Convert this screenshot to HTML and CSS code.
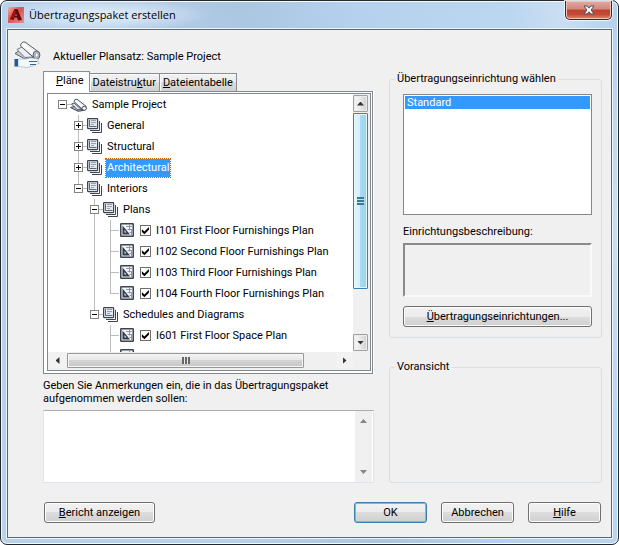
FILE: index.html
```html
<!DOCTYPE html>
<html lang="de">
<head>
<meta charset="utf-8">
<title>Übertragungspaket erstellen</title>
<link rel="stylesheet" href="styles.css">
</head>
<body>
<svg class="defs" aria-hidden="true">
  <defs>
    <linearGradient id="steel" x1="0" y1="1" x2="1" y2="0"><stop offset="0" stop-color="#9aa3ae"/><stop offset=".5" stop-color="#fff"/><stop offset="1" stop-color="#b4bbc4"/></linearGradient>
    <linearGradient id="red" x1="0" y1="0" x2="1" y2="1"><stop offset="0" stop-color="#f4b0ac"/><stop offset=".45" stop-color="#d9534f"/><stop offset="1" stop-color="#f0908c"/></linearGradient>
    <symbol id="stack" viewBox="0 0 16 16">
      <path d="M14.500 5v9.500H5M12.500 3v9.500H3" fill="none" stroke="#3c4454"/>
      <rect x=".6" y=".6" width="10" height="10" rx=".5" fill="#e4e9ee" stroke="#3c4454" stroke-width="1.2"/>
      <path d="M2.500 2v6.500h7" fill="none" stroke="#5d6675"/>
      <path d="M4 2.500h5M4 4.500h5M4 6.500h3" fill="none" stroke="#98a1ad"/>
    </symbol>
    <symbol id="sheet" viewBox="0 0 15 15">
      <rect x=".75" y=".75" width="12.500" height="12.500" rx=".5" fill="#f2f4f6" stroke="#3c4454" stroke-width="1.5"/>
      <path d="M2.500 2.500v9h7.500zM4.500 7v2.500h2z" fill="#323b4c" fill-rule="evenodd"/>
      <path d="M6 3.500h6M9.500 2v5.500M7.500 6.500h4.500M11.500 7v5M9.500 9.500h3" fill="none" stroke="#8e97a5"/>
    </symbol>
    <symbol id="rolls" viewBox="0 0 18 14">
      <path d="M.5 9.500 4 8.500l9 4-5 .8z" fill="#b3bbc5" stroke="#3f4754"/>
      <path d="M1.500 6 4 5l8 7-5-.5z" fill="#dfe3e8" stroke="#4f5765"/>
      <path d="M4 3.500Q4.500 .7 7 1.200l9 7q.8 3.500-2.500 4.300z" fill="url(#steel)" stroke="#4a5260"/>
      <ellipse cx="14.200" cy="10.300" rx="2.200" ry="2" fill="#f3f5f7" stroke="#4a5260"/>
    </symbol>
  </defs>
</svg>
<div class="window" role="dialog" aria-labelledby="title">
  <header class="titlebar">
    <svg class="app-icon" viewBox="0 0 16 16" aria-hidden="true">
      <rect width="16" height="16" fill="url(#red)"/>
      <path d="M6.500 2h3L14 13l-4 .5-1-3H6.500l-1 2.500L2 12z" fill="#5e0c0e"/>
      <path d="M6.500 2 2 12l4-1.500L8 5z" fill="#a31316"/>
      <path d="M8 6.500 7.200 9h1.700z" fill="#dd6662"/>
    </svg>
    <h1 id="title">Übertragungspaket erstellen</h1>
    <button class="close" type="button" aria-label="Schließen">
      <svg viewBox="0 0 12 10" aria-hidden="true"><path d="M1 1h3l2 2.200L8 1h3L8 5l3 4H8L6 6.800 4 9H1l3-4z" fill="#fff" stroke="#4b4f63"/></svg>
    </button>
  </header>

  <main class="client">
    <div class="current">
      <svg class="current-icon" viewBox="0 0 27 30" aria-hidden="true">
        <path d="M1 12.500 6 9l14 7-9 2z" fill="#c3cad2" stroke="#59616d"/>
        <path d="M3 8.500 8 6l11 10-8 .5z" fill="#eceef1" stroke="#717985"/>
        <path d="M6.500 5Q7 .5 11 1l13 9.500-3 7z" fill="url(#steel)" stroke="#59616d"/>
        <ellipse cx="22.500" cy="14" rx="3.400" ry="4" fill="#b9c0c9" stroke="#59616d"/>
        <ellipse cx="22.700" cy="14" rx="1.500" ry="2" fill="#fff" stroke="#7d8591" stroke-width=".6"/>
        <path d="M4 18h8l4-1 8 1q2 1-1 2l2 1q1 2-2 2l-4 2-6 1.500-9-1z" fill="#f4f9fc" stroke="#a9c0d2" stroke-width=".8"/>
        <path d="M15 20.500h8M16 23.500h6" stroke="#36628c"/>
        <path d="M.5 18h3.500v7.500H.5z" fill="#205b91"/>
      </svg>
      <p>Aktueller Plansatz: Sample Project</p>
    </div>

    <div class="columns">
      <section class="left">
        <div class="tabs" role="tablist">
          <button class="tab tab-active" type="button" role="tab" aria-selected="true"><u>P</u>läne</button>
          <button class="tab" type="button" role="tab" aria-selected="false">Dateistru<u>k</u>tur</button>
          <button class="tab" type="button" role="tab" aria-selected="false"><u>D</u>ateientabelle</button>
        </div>
        <div class="panel">
          <div class="tree-frame">
            <ul class="tree" role="tree" aria-label="Pläne">
              <li class="row"><button class="toggle minus" type="button" aria-label="Reduzieren"></button><svg class="rolls"><use href="#rolls"/></svg><span class="name">Sample Project</span></li>
              <li class="row level1"><span class="guide"></span><button class="toggle plus" type="button" aria-label="Erweitern"></button><svg class="stack"><use href="#stack"/></svg><span class="name">General</span></li>
              <li class="row level1"><span class="guide"></span><button class="toggle plus" type="button" aria-label="Erweitern"></button><svg class="stack"><use href="#stack"/></svg><span class="name">Structural</span></li>
              <li class="row level1"><span class="guide"></span><button class="toggle plus" type="button" aria-label="Erweitern"></button><svg class="stack"><use href="#stack"/></svg><span class="name selected">Architectural</span></li>
              <li class="row level1 last"><span class="guide"></span><button class="toggle minus" type="button" aria-label="Reduzieren"></button><svg class="stack"><use href="#stack"/></svg><span class="name">Interiors</span></li>
              <li class="row level2"><span class="guide"></span><button class="toggle minus" type="button" aria-label="Reduzieren"></button><svg class="stack"><use href="#stack"/></svg><span class="name">Plans</span></li>
              <li class="row level3 under"><span class="guide"></span><svg class="sheet"><use href="#sheet"/></svg><label><input type="checkbox" checked>I101 First Floor Furnishings Plan</label></li>
              <li class="row level3 under"><span class="guide"></span><svg class="sheet"><use href="#sheet"/></svg><label><input type="checkbox" checked>I102 Second Floor Furnishings Plan</label></li>
              <li class="row level3 under"><span class="guide"></span><svg class="sheet"><use href="#sheet"/></svg><label><input type="checkbox" checked>I103 Third Floor Furnishings Plan</label></li>
              <li class="row level3 under last"><span class="guide"></span><svg class="sheet"><use href="#sheet"/></svg><label><input type="checkbox" checked>I104 Fourth Floor Furnishings Plan</label></li>
              <li class="row level2 last"><span class="guide"></span><button class="toggle minus" type="button" aria-label="Reduzieren"></button><svg class="stack"><use href="#stack"/></svg><span class="name">Schedules and Diagrams</span></li>
              <li class="row level3"><span class="guide"></span><svg class="sheet"><use href="#sheet"/></svg><label><input type="checkbox" checked>I601 First Floor Space Plan</label></li>
              <li class="row level3"><span class="guide"></span><svg class="sheet"><use href="#sheet"/></svg></li>
            </ul>
            <div class="vbar">
              <button class="step" type="button" aria-label="Nach oben"><i class="arrow up"></i></button>
              <div class="vthumb"><i class="grip"></i></div>
              <div class="vtrack"></div>
              <button class="step" type="button" aria-label="Nach unten"><i class="arrow down"></i></button>
            </div>
            <div class="hbar">
              <button class="flat" type="button" aria-label="Nach links"><i class="arrow left-arrow"></i></button>
              <div class="hthumb"><i class="grip grip-h"></i></div>
              <div class="htrack"></div>
              <button class="flat" type="button" aria-label="Nach rechts"><i class="arrow right-arrow"></i></button>
            </div>
          </div>
        </div>
        <label class="notes-label" for="notes">Geben Sie Anmerkungen ein, die in das Übertragungspaket aufgenommen werden sollen:</label>
        <div class="notes">
          <textarea id="notes"></textarea>
          <div class="notes-bar"><i class="arrow up"></i><i class="arrow down"></i></div>
        </div>
      </section>

      <section class="right">
        <fieldset>
          <legend>Übertragungseinrichtung wählen</legend>
          <select class="setups" size="8" aria-label="Übertragungseinrichtung wählen">
            <option selected>Standard</option>
          </select>
          <label class="desc-label" for="desc">Einrichtungsbeschreibung:</label>
          <textarea id="desc" class="desc" readonly></textarea>
          <button class="btn" type="button"><span><u>Ü</u>bertragungseinrichtungen...</span></button>
        </fieldset>
        <fieldset class="preview">
          <legend>Voransicht</legend>
        </fieldset>
      </section>
    </div>

    <footer class="actions">
      <button class="btn report" type="button"><span><u>B</u>ericht anzeigen</span></button>
      <button class="btn default" type="button">OK</button>
      <button class="btn" type="button">Abbrechen</button>
      <button class="btn" type="button"><span><u>H</u>ilfe</span></button>
    </footer>
  </main>
</div>
</body>
</html>
```
FILE: styles.css
```css
* { box-sizing: border-box; }

body {
  margin: 0;
  background: #fff;
  color: #000;
  font: 11px/16px Roboto, "Liberation Sans", sans-serif;
}

button, select, textarea { font: inherit; color: inherit; margin: 0; }
button { padding: 0; }
h1, p, ul { margin: 0; padding: 0; }
i { display: block; }
u { text-underline-offset: 1px; }
.defs { position: absolute; width: 0; height: 0; }

/* Window frame */
.window {
  display: flex;
  flex-direction: column;
  min-height: 100vh;
  padding: 0 6px 6px;
  border: 1px solid #23272e;
  border-radius: 7px;
  background: linear-gradient(75deg, #b9d2ec 0%, #b9d2ec 30%, #abc6e1 50%, #b6d1ed 65%, #bbd6f0 85%, #cadef2 92%, #b3cfea 100%);
  box-shadow: inset 0 0 0 1px #f4f9fd;
}

.titlebar {
  display: flex;
  align-items: flex-start;
  height: 28px;
  background: radial-gradient(ellipse 110px 16px at 95px 14px, #e6f0fa, #e6f0fa00);
}

.app-icon { width: 16px; height: 16px; margin: 6px 0 0 1px; }

h1 {
  flex: 1;
  margin: 6px 0 0 5px;
  font: 11px/16px "Open Sans", sans-serif;
}

.close {
  display: flex;
  align-items: center;
  justify-content: center;
  width: 47px;
  height: 19px;
  border: 1px solid #4c1f22;
  border-top: 0;
  border-radius: 0 0 5px 5px;
  background: linear-gradient(#e3aca5, #d1877c 45%, #bd4431 50%, #c64b34 75%, #e08a72);
  box-shadow: inset 0 0 0 1px #f0c3bc, 0 0 1px 1px #edf5fc;
}
.close svg { width: 12px; height: 10px; }

.client {
  display: flex;
  flex: 1;
  flex-direction: column;
  border: 1px solid #5c6873;
  background: #f0f0f0;
  box-shadow: 0 0 0 1px #edf5fc;
}

.current {
  display: flex;
  align-items: center;
  gap: 12px;
  padding: 11px 10px 0 6px;
}
.current-icon { width: 27px; height: 30px; }
.current p { padding-top: 2px; }

.columns {
  display: grid;
  flex: 1;
  grid-template-columns: minmax(0, 331fr) minmax(0, 213fr);
  gap: 15px;
  padding: 0 9px 0 35px;
}
.left, .right { display: flex; flex-direction: column; }

/* Tabs */
.tabs { display: flex; align-items: flex-end; height: 20px; }
.tab {
  height: 18px;
  padding: 0 3px;
  border: 1px solid #898c95;
  border-width: 1px 1px 0 0;
  background: linear-gradient(#f2f2f2, #ebebeb 50%, #dddddd 50%, #cfcfcf);
  box-shadow: inset 1px 1px 0 #fafafa;
  line-height: 16px;
}
.tab-active {
  position: relative;
  height: 21px;
  margin-bottom: -1px;
  padding: 0 5px 3px 12px;
  border-left-width: 1px;
  background: #fff;
}

.panel {
  padding: 1px 1px 2px 3px;
  border: 1px solid #828790;
  margin-right: 1px;
  background: #fff;
  box-shadow: 1px 0 0 #fff;
}
.tree-frame {
  display: grid;
  grid-template-columns: minmax(0, 1fr) 17px;
  grid-template-rows: 258px 18px;
  border: 1px solid #828790;
}

/* Sheet tree */
.tree { overflow: hidden; padding-left: 6px; list-style: none; }
.row { display: flex; align-items: center; height: 21px; position: relative; white-space: nowrap; }
.level1 { padding-left: 16px; }
.level2 { padding-left: 32px; }
.level3 { padding-left: 48px; }

.guide { position: absolute; top: 0; bottom: 0; width: 16px; }
.guide::before {
  content: "";
  position: absolute;
  top: 0;
  bottom: 0;
  left: 8px;
  border-left: 1px solid #bcbcbc;
}
.last .guide::before { bottom: 10px; }
.level3 .guide::after {
  content: "";
  position: absolute;
  top: 10px;
  left: 8px;
  width: 9px;
  border-top: 1px solid #bcbcbc;
}
.under::before {
  content: "";
  position: absolute;
  top: 0;
  bottom: 0;
  left: 40px;
  border-left: 1px solid #bcbcbc;
}

.toggle {
  position: relative;
  width: 9px;
  height: 9px;
  margin: 0 3px 0 4px;
  border: 1px solid #848484;
  background: linear-gradient(#000, #000) center / 5px 1px no-repeat, #fff;
}
.plus { background: linear-gradient(#000, #000) center / 5px 1px no-repeat, linear-gradient(#000, #000) center / 1px 5px no-repeat, #fff; }
.toggle::after {
  content: "";
  position: absolute;
  top: 3px;
  left: 8px;
  width: 4px;
  border-top: 1px solid #bcbcbc;
}
.rolls { width: 18px; height: 14px; }
.stack { width: 16px; height: 16px; margin-left: 1px; }
.sheet { width: 15px; height: 15px; margin-left: 18px; }
.name { padding: 2px; margin-left: 2px; }
.selected {
  padding: 1px;
  border: 1px dotted #cc6600;
  background: #3399ff;
  background-clip: padding-box;
  color: #fff;
}
.row label { display: flex; align-items: center; gap: 5px; margin-left: 5px; }
.row input {
  appearance: none;
  width: 11px;
  height: 11px;
  margin: 0;
  border: 1px solid #6e6e6e;
  background: #fff;
}
.row input:checked::before {
  content: "";
  display: block;
  width: 9px;
  height: 9px;
  background: #000;
  clip-path: polygon(10% 35%, 38% 60%, 88% 10%, 88% 42%, 38% 92%, 10% 66%);
}

/* Scroll bars */
.arrow { width: 7px; height: 4px; background: #333; }
.up { clip-path: polygon(50% 0, 100% 100%, 0 100%); }
.down { clip-path: polygon(0 0, 100% 0, 50% 100%); }
.left-arrow { width: 4px; height: 7px; clip-path: polygon(100% 0, 100% 100%, 0 50%); }
.right-arrow { width: 4px; height: 7px; clip-path: polygon(0 0, 100% 50%, 0 100%); }

.vbar { display: flex; flex-direction: column; padding: 1px 2px 1px 0; background: #f0f0f0; }
.step {
  display: flex;
  align-items: center;
  justify-content: center;
  height: 17px;
  border: 1px solid #a0a0a0;
  border-radius: 1px;
  background: linear-gradient(90deg, #f6f6f6, #e9e9e9 50%, #cfcfcf);
  box-shadow: inset 0 0 0 1px #ececec;
}
.vthumb {
  display: flex;
  flex: 176;
  align-items: center;
  justify-content: center;
  margin-top: 1px;
  border: 1px solid #3c7fb1;
  border-radius: 1px;
  background: linear-gradient(90deg, #e1f4fd, #d5effc 48%, #a8dbf4 50%, #9bd1ed);
  box-shadow: inset 0 0 0 1px #e5f6fe;
}
.vtrack { flex: 45; }
.grip { width: 7px; height: 8px; background: repeating-linear-gradient(#3d7995 0 2px, #bce5f8 2px 3px); }

.hbar { display: flex; grid-column: 1 / -1; padding: 1px 17px 2px 1px; background: #f0f0f0; }
.flat {
  display: flex;
  align-items: center;
  justify-content: center;
  width: 17px;
  border: 0;
  background: #f2f2f2;
}
.hthumb {
  display: flex;
  flex: 236;
  align-items: center;
  justify-content: center;
  margin-left: 1px;
  border: 1px solid #979797;
  border-radius: 1px;
  background: linear-gradient(#f4f4f4, #e7e7e7 45%, #d3d3d3 50%, #c6c6c8);
  box-shadow: inset 0 0 0 1px #f5f5f5;
}
.htrack { flex: 32; }
.grip-h { width: 8px; height: 7px; background: repeating-linear-gradient(90deg, #666 0 2px, #eee 2px 3px); }

/* Notes */
.notes-label { margin: 5px 40px 5px 0; line-height: 13px; }
.notes {
  display: flex;
  flex: 1;
  border: 1px solid #e2e3ea;
  border-top-color: #abadb3;
  background: #fff;
}
.notes textarea { flex: 1; min-width: 0; height: 71px; border: 0; resize: none; outline: 0; background: #fff; }
.notes-bar {
  display: flex;
  flex-direction: column;
  align-items: center;
  justify-content: space-between;
  width: 17px;
  padding: 8px 0;
  margin-right: 1px;
  background: #f0f0f0;
}
.notes-bar .arrow { background: #858585; }

/* Setup group */
.right { gap: 21px; }
fieldset {
  display: flex;
  flex-direction: column;
  min-width: 0;
  margin: 0;
  padding: 7px 9px 10px 13px;
  border: 1px solid #d5dfe5;
  border-radius: 3px;
}
legend { margin-left: -8px; padding: 0 2px; }
.preview { flex: 1; }

.setups {
  height: 121px;
  padding: 1px;
  border: 1px solid #828790;
  border-radius: 0;
  background: #fff;
  overflow: hidden;
  outline: 0;
}
.setups option { min-height: 13px; padding: 0 2px; line-height: 13px; }
.setups option:checked { background: #3399ff linear-gradient(#3399ff, #3399ff); color: #fff; }

.desc-label { margin: 9px 0 3px; }
.desc {
  height: 54px;
  margin-bottom: 9px;
  border: 2px solid;
  border-color: #8a8a8a #fafafa #fafafa #8a8a8a;
  background: #f0f0f0;
  resize: none;
  outline: 0;
}

/* Push buttons */
.btn {
  height: 21px;
  border: 1px solid #707070;
  border-radius: 3px;
  background: linear-gradient(#f2f2f2, #ebebeb 50%, #dddddd 50%, #cfcfcf);
  box-shadow: inset 0 0 0 1px #fcfcfc;
}
.default { border-color: #3c7fb1; box-shadow: inset 0 0 0 1px #43d0f5; }

.actions { display: flex; gap: 14px; padding: 19px 10px 14px 36px; }
.actions .btn { width: 73px; }
.actions .report { width: 111px; margin-right: auto; }
```
